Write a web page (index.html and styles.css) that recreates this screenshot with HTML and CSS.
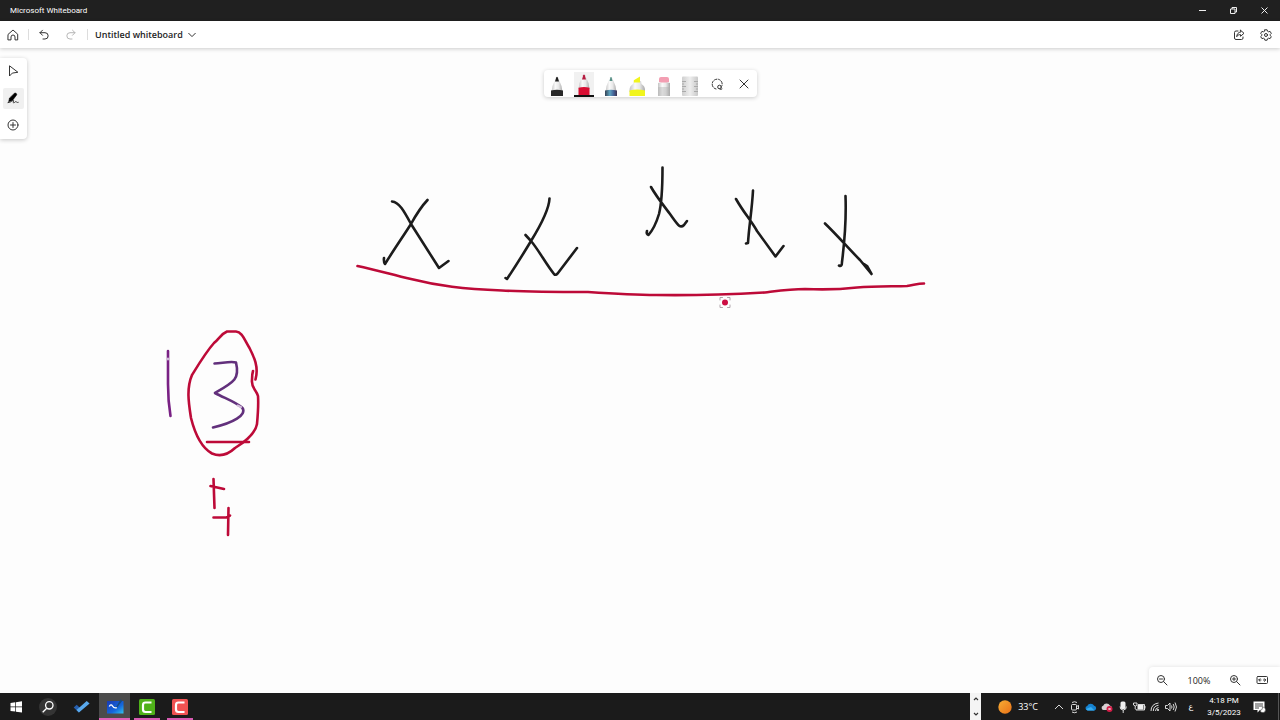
FILE: index.html
```html
<!DOCTYPE html>
<html lang="en">
<head>
<meta charset="utf-8">
<title>Microsoft Whiteboard</title>
<link rel="stylesheet" href="styles.css">
</head>
<body>
<div class="app">
  <header class="titlebar">
    <span class="titlebar-name">Microsoft Whiteboard</span>
    <div class="window-controls">
      <button class="window-btn" aria-label="Minimize"><svg width="9" height="9" viewBox="0 0 9 9"><path d="M1 4.500h7"/></svg></button>
      <button class="window-btn" aria-label="Restore"><svg width="9" height="9" viewBox="0 0 9 9"><path d="M1.500 3h4.500v4.500h-4.500zM3 3V1.500h4.500V6H6"/></svg></button>
      <button class="window-btn" aria-label="Close"><svg width="9" height="9" viewBox="0 0 9 9"><path d="M1.500 1.500l6 6M7.500 1.500l-6 6"/></svg></button>
    </div>
  </header>

  <nav class="header">
    <button class="icon-btn" aria-label="Home"><svg width="12" height="12" viewBox="0 0 12 12"><path d="M1.300 5.200L6 1l4.700 4.200v5.700H8V8a2 2 0 0 0-4 0v2.900H1.300z"/></svg></button>
    <span class="divider"></span>
    <button class="icon-btn" aria-label="Undo"><svg width="12" height="12" viewBox="0 0 12 12"><path d="M4.500 1.200L2 3.700l2.500 2.600M2 3.700h5a3 3 0 0 1 0 6.300H5"/></svg></button>
    <button class="icon-btn icon-btn-off" aria-label="Redo" disabled><svg width="12" height="12" viewBox="0 0 12 12"><path d="M7.500 1.200L10 3.700 7.500 6.300M10 3.700H5A3 3 0 0 0 5 10h2"/></svg></button>
    <span class="divider"></span>
    <button class="board-name">Untitled whiteboard<svg width="8" height="8" viewBox="0 0 8 8"><path d="M.7 2.300L4 5.600l3.300-3.300"/></svg></button>
    <div class="header-end">
      <button class="icon-btn" aria-label="Share"><svg width="12" height="12" viewBox="0 0 12 12"><path d="M5 2H3a1.500 1.500 0 0 0-1.500 1.500v5.500A1.500 1.500 0 0 0 3 10.500h5.500A1.500 1.500 0 0 0 10 9V8M7.500 1.200L11 4.300 7.500 7.300V5.600C5.500 5.600 4.500 6.300 3.700 7.700c.2-2.500 1.500-4.500 3.800-4.700z"/></svg></button>
      <button class="icon-btn" aria-label="Settings"><svg width="12" height="12" viewBox="0 0 12 12"><path d="M4.900.8h2.200l.5 1.500.9.500 1.600-.4 1.200 2-1.100 1.100v1l1.100 1.100-1.200 2-1.600-.4-.9.500-.5 1.500H4.900l-.5-1.500-.9-.5-1.600.4-1.200-2 1.100-1.100v-1L.7 4.400l1.200-2 1.600.4.9-.5z"/><circle cx="6" cy="6" r="1.500"/></svg></button>
    </div>
  </nav>

  <main class="board">
    <svg class="ink" viewBox="0 48 1280 645" preserveAspectRatio="xMinYMin slice" aria-label="Handwritten notes">
      <g class="ink-black">
        <path d="M392 201.500C399 202 404 211 411 224L439 268L448.500 261M427.500 200C420 208 417 213 411 224C402 238 393 251 385 264Q383.500 262 384 258"/>
        <path d="M549.500 198.500C549 211 539 228 531 241C522 256 515 267 507 279L505.500 278M525.500 235L531 241C538 249 546 264 554 274Q556 276 558 273L577 248"/>
        <path d="M662.500 167.500C662.500 188 662 202 659 214C656 224 652 231 648.500 235Q646 234 647 231M651 187C656 196 664 206 670 214C678 225 680 229 684 225L687 221"/>
        <path d="M753 190.500C752 210 749 226 748 243L746 243.500M736 199C744 213 750 219 757 231L775.500 256.500L783.500 246"/>
        <path d="M845.500 196C846.500 222 844 246 842 262Q842 267 839 265.500M825 223.500C837 235 849 249 860 260L871.500 274L867 266L864 264"/>
      </g>
      <g class="ink-red">
        <path d="M357.500 266C377 270 393 275 411 279C439 286 462 289 502 290.500C530 292 560 292 588 292C610 293.500 632 295 656 295C690 295.500 720 295 765 292.500C781 290.500 791 289 805 289C827 290 844 289 857 287.500C875 286 893 286.500 907 286C914 285 918 283.500 924 283.500"/>
        <path d="M255.500 379.500C259 367 254 357 249.500 348C244 339 242 332 236 331.500H227C221 334 220 338 214 343C206 352 200 362 192 375C186 389 189 405 191 418C195 434 202 448 212 453.500C220 457 227 455.500 235 448C243 443 255 435 257 424C258 413 258.500 403 258 396C256 389 251 388 252 380Q252 374 253 371"/>
        <path d="M207 442H249M213.500 479L214.500 508M210.500 486L224 489M213.500 517.500H226.500L230 515.500M228.500 508L228 535"/>
      </g>
      <g class="ink-galaxy">
        <path class="ink-purple" d="M168 351V384C168 399 169 407 170.500 416"/>
        <path class="ink-violet" d="M214.500 363.500C223 363 231 361 236 362.500C240 379 234 382 215 393C224 398 236 402 242.500 408C247 415 233 423 213 427.500"/>
        <path class="ink-spark" d="M237.500 405.500L241 407M168 358.500v1"/>
      </g>
      <g class="pointer">
        <circle class="pointer-dot" cx="725" cy="302.500" r="3"/>
        <path class="pointer-frame" d="M720 300v-2.500h2.500M727.500 297.500h2.500v2.500M730 305v2.500h-2.500M722.500 307.500H720V305"/>
      </g>
    </svg>

    <div class="side-tools">
      <button class="side-btn" aria-label="Select"><svg width="12" height="12" viewBox="0 0 12 12"><path d="M2.500 1.200v9.800l2.800-2.900 5.200-.8z"/></svg></button>
      <button class="side-btn side-btn-on" aria-label="Inking"><svg width="12" height="12" viewBox="0 0 12 12"><path class="fill" d="M7.500 1.200c1-.9 2.900.6 2.100 1.900L5.500 8.400l-3.900 1.300.9-3.500z"/><path d="M1 10.700c2.700 0 5-2.800 5.600-2.200.6.500-1.200 2.300.1 2.300 1 0 1.500-1.400 2.300-1.200.6.100.6 1.300 2.200.8"/></svg></button>
      <button class="side-btn" aria-label="Create"><svg width="12" height="12" viewBox="0 0 12 12"><circle cx="6" cy="6" r="5"/><path d="M6 3.500v5M3.500 6h5"/></svg></button>
    </div>

    <div class="pen-tools">
      <button class="pen-btn" aria-label="Black pen"><svg width="20" height="25" viewBox="0 0 20 25"><path fill="url(#body)" d="M4.500 20l1-6L8.800 6h2.400l3.300 8 1 6z"/><path fill="#222" d="M8 9.500l1.200-4q.8-1.400 1.600 0l1.200 4z"/><path fill="#292929" d="M4 18.500q6-1.700 12 0V24H4z"/></svg></button>
      <button class="pen-btn pen-btn-on" aria-label="Red pen"><svg width="20" height="23" viewBox="0 0 20 23"><path fill="url(#body)" d="M4.500 17l1-6L8.800 3.500h2.400l3.300 7.500 1 6z"/><path fill="#b51c40" d="M8 7.500l1.200-4.300q.8-1.200 1.600 0L12 7.500z"/><path fill="#d80d32" d="M4.500 15.700q5.500-1.500 11 0V23h-11z"/></svg></button>
      <button class="pen-btn" aria-label="Galaxy pen"><svg width="20" height="25" viewBox="0 0 20 25"><path fill="url(#body)" d="M4.500 20l1-6L8.800 6h2.400l3.300 8 1 6z"/><path fill="#589087" d="M8.500 9l.9-3.400q.6-1.400 1.200 0L11.500 9z"/><path fill="url(#galaxy)" d="M4 18.500q6-1.700 12 0V24H4z"/></svg></button>
      <button class="pen-btn" aria-label="Highlighter"><svg width="20" height="25" viewBox="0 0 20 25"><path fill="url(#body)" d="M2.500 18q0-4 3.500-6l1-3h7l.5 3q3.500 2 3.500 6v2H2.500z"/><path fill="#f1f51d" d="M6.800 10.500V8.300L13 4.500v6zM2.500 18.500q7.500-2 15.500 0V24H2.500z"/></svg></button>
      <button class="pen-btn" aria-label="Eraser"><svg width="20" height="25" viewBox="0 0 20 25"><path fill="url(#body)" d="M4 11q6-1.800 12 0v13H4z"/><path fill="#f39eb2" d="M5 10V7q0-2 2-2h6q2 0 2 2v3q-5 1-10 0z"/><path fill="#adadad" opacity=".4" d="M4 15h12v9H4z"/></svg></button>
      <button class="pen-btn" aria-label="Ruler"><svg width="20" height="25" viewBox="0 0 20 25"><rect x="2" y="4.500" width="16" height="19.500" rx="1" fill="url(#ruler)"/><path stroke="#aaa" d="M2 9.500h4M2 14.500h4M2 19.500h4M14 9.500h4M14 14.500h4M14 19.500h4M2 12h2M2 17h2M16 12h2M16 17h2"/></svg></button>
      <button class="pen-btn pen-btn-line" aria-label="Lasso select"><svg width="14" height="14" viewBox="0 0 14 14"><path stroke-dasharray="2.300 1.500" d="M6 12A5 5 0 1 1 12 8.500"/><circle cx="9.500" cy="10" r="1.800"/><path d="M9.500 11.800q1 1.500 2.500.2"/></svg></button>
      <button class="pen-btn pen-btn-line" aria-label="Close toolbar"><svg width="14" height="14" viewBox="0 0 14 14"><path d="M3 3l8 8M11 3l-8 8"/></svg></button>
    </div>

    <div class="zoom-panel">
      <button class="icon-btn" aria-label="Zoom out"><svg width="12" height="12" viewBox="0 0 12 12"><circle cx="5" cy="5" r="3.500"/><path d="M7.600 7.600L11 11M3.500 5h3"/></svg></button>
      <button class="zoom-value">100%</button>
      <button class="icon-btn" aria-label="Zoom in"><svg width="12" height="12" viewBox="0 0 12 12"><circle cx="5" cy="5" r="3.500"/><path d="M7.600 7.600L11 11M3.500 5h3M5 3.500v3"/></svg></button>
      <button class="icon-btn" aria-label="Fit to screen"><svg width="12" height="12" viewBox="0 0 12 12"><rect x="1" y="2.500" width="10.500" height="7" rx="1"/><path d="M5 6H3M7.500 6h2M4 4.700L2.700 6 4 7.300M8.500 4.700L9.800 6 8.500 7.300"/></svg></button>
    </div>
  </main>

  <footer class="taskbar">
    <button class="task-btn" aria-label="Start"><svg width="20" height="20" viewBox="0 0 20 20"><path fill="#fff" d="M4.500 6l4.800-.7v4.200H4.500zM10 5.200l6-.9v5.200h-6zM4.500 10.300h4.800v4.300l-4.800-.7zM10 10.300h6v5.300l-6-.9z"/></svg></button>
    <button class="task-btn" aria-label="Search"><svg width="20" height="20" viewBox="0 0 20 20"><circle cx="10" cy="10" r="9" fill="#343434"/><g fill="none" stroke="#fff" stroke-width="1.300"><circle cx="11.300" cy="8.300" r="3.700"/><path d="M8.700 11.200l-4 4"/></g></svg></button>
    <button class="task-btn task-btn-wide" aria-label="To Do"><svg width="20" height="20" viewBox="0 0 20 20"><path fill="#275fae" d="M1.700 10.500l3-2.800 5 4.700-2.800 3.200z"/><path fill="#59a9ed" d="M6.900 15.600l-2.400-2.500L14.700 4l2.900 2.600z"/></svg></button>
    <button class="task-btn task-btn-active" aria-label="Microsoft Whiteboard"><svg width="20" height="20" viewBox="0 0 20 20"><path fill="url(#app)" d="M2 4h16.500v12.500H2z"/><path fill="#174c84" d="M15.500 2.300l1.800 1.500-5.300 7-1.500.2z"/><path fill="none" stroke="#fff" stroke-width="1.400" d="M4.300 9.500Q6 6.500 7.500 9t4.300 1.700"/></svg></button>
    <button class="task-btn task-btn-open" aria-label="Camtasia"><svg width="20" height="20" viewBox="0 0 20 20"><rect x="2" y="2" width="16" height="16" rx="1.500" fill="#4fb119"/><path fill="none" stroke="#fff" stroke-width="2.200" d="M14.500 5.500h-6q-2.500 0-2.500 2.500v4.500Q6 15 8.500 15h6"/></svg></button>
    <button class="task-btn task-btn-open" aria-label="Camtasia Recorder"><svg width="20" height="20" viewBox="0 0 20 20"><rect x="2" y="2" width="16" height="16" rx="1.500" fill="#f05252"/><path fill="none" stroke="#fff" stroke-width="2.200" d="M14.500 5.500h-6q-2.500 0-2.500 2.500v4.500Q6 15 8.500 15h6"/></svg></button>

    <div class="tray">
      <div class="tray-scroll">
        <button class="scroll-btn" aria-label="Scroll up"><svg width="8" height="8" viewBox="0 0 8 8"><path d="M2 5l2-2 2 2"/></svg></button>
        <button class="scroll-btn" aria-label="Scroll down"><svg width="8" height="8" viewBox="0 0 8 8"><path d="M2 3l2 2 2-2"/></svg></button>
      </div>
      <button class="weather"><svg width="14" height="14" viewBox="0 0 14 14"><circle cx="7" cy="7" r="6.700" fill="url(#sun)"/></svg>33°C</button>
      <div class="tray-icons">
        <button class="tray-btn" aria-label="Show hidden icons"><svg width="14" height="14" viewBox="0 0 14 14"><path d="M3 9l4-4 4 4"/></svg></button>
        <button class="tray-btn" aria-label="Meet Now"><svg width="14" height="14" viewBox="0 0 14 14"><rect x="3.500" y="4.500" width="5" height="5.500" rx="1"/><path d="M8.500 6.500l2-1v3.500l-2-1M4 2.500q2.500-1.500 5 0M4 12q2.500 1.500 5 0"/></svg></button>
        <button class="tray-btn" aria-label="OneDrive"><svg width="14" height="14" viewBox="0 0 14 14"><path class="solid" fill="#1683d1" d="M3.500 10.500a2.300 2.300 0 0 1-.3-4.500 4 4 0 0 1 7-.3 2.500 2.500 0 0 1 .3 4.800z"/><path class="solid" fill="#36aef2" d="M2 9l5-2 3.500 3.500h-7z"/></svg></button>
        <button class="tray-btn" aria-label="Sync error"><svg width="14" height="14" viewBox="0 0 14 14"><path class="solid" fill="#d8d0d2" d="M3.500 10a2.200 2.200 0 0 1-.3-4.300 3.700 3.700 0 0 1 6.700-.2L12 7v3z"/><circle class="solid" cx="9.500" cy="9" r="3" fill="#d71d48"/><path d="M8.500 8l2 2M10.500 8l-2 2"/></svg></button>
        <button class="tray-btn" aria-label="Microphone"><svg width="14" height="14" viewBox="0 0 14 14"><rect class="solid" x="4.500" y="1.500" width="5" height="7.500" rx="1.500" fill="#eee"/><path d="M4 6.500q0 3.500 3.200 3.500t3.200-3.500M7.200 10v3"/></svg></button>
        <button class="tray-btn" aria-label="Battery"><svg width="14" height="14" viewBox="0 0 14 14"><rect class="solid" x="5.500" y="5" width="6" height="4.500" fill="#eee"/><path d="M4 9v1h8.500V4.500H6M13 6v2.500M1.500 3v2q2 2 3.500 0V3zM3.200 6v3"/></svg></button>
        <button class="tray-btn" aria-label="Wi-Fi"><svg width="14" height="14" viewBox="0 0 14 14"><circle class="solid" cx="10" cy="10" r="1" fill="#eee"/><path d="M7.500 11q0-3 3-3.500M5.300 11q0-5 5.200-5.700M3 11Q3 4 10.500 3"/></svg></button>
        <button class="tray-btn" aria-label="Volume"><svg width="14" height="14" viewBox="0 0 14 14"><path d="M1.500 5.500h2L6 3v8L3.500 8.500h-2zM7.500 5.500q1 1.500 0 3M9.200 4q2 3 0 6M11 2.500q3 4.500 0 9"/></svg></button>
      </div>
      <button class="language" lang="ar">ع</button>
      <button class="clock"><span>4:18 PM</span><span>3/5/2023</span></button>
      <button class="notifications" aria-label="Notifications"><svg width="14" height="14" viewBox="0 0 14 14"><path fill="#fff" d="M1.500 1.500h11v8.500H8l-2.500 2.500V10h-4z"/><path fill="none" stroke="#444" d="M3 4h8M3 6h8M3 8h4"/><path fill="#fff" stroke="#444" stroke-width=".6" d="M8 10.500a3 3 0 0 0 2.500-3.500 2.800 2.800 0 1 1-2.500 3.500z"/></svg></button>
    </div>
  </footer>
</div>

<svg class="defs" width="0" height="0" aria-hidden="true"><defs>
  <linearGradient id="body"><stop offset="0" stop-color="#c4c4c4"/><stop offset=".35" stop-color="#fafafa"/><stop offset=".65" stop-color="#e9e9e9"/><stop offset="1" stop-color="#a9a9a9"/></linearGradient>
  <linearGradient id="galaxy"><stop offset="0" stop-color="#344153"/><stop offset=".4" stop-color="#5fa4c0"/><stop offset=".7" stop-color="#46669a"/><stop offset="1" stop-color="#3b3150"/></linearGradient>
  <linearGradient id="ruler"><stop offset="0" stop-color="#cfcfcf"/><stop offset=".5" stop-color="#eeeeee"/><stop offset="1" stop-color="#c8c8c8"/></linearGradient>
  <linearGradient id="app" x2="1" y2="1"><stop offset="0" stop-color="#1939b3"/><stop offset=".6" stop-color="#1466dc"/><stop offset="1" stop-color="#31c5f0"/></linearGradient>
  <linearGradient id="sun" x2="1" y2="1"><stop offset="0" stop-color="#f6ad35"/><stop offset="1" stop-color="#ea7117"/></linearGradient>
</defs></svg>
</body>
</html>
```
FILE: styles.css
```css
* { box-sizing: border-box; }

body {
  margin: 0;
  font-family: "Open Sans", "Noto Sans", sans-serif;
  font-size: 9px;
  color: #242424;
}

button {
  display: flex;
  align-items: center;
  justify-content: center;
  margin: 0;
  padding: 0;
  border: 0;
  background: none;
  color: inherit;
  font: inherit;
}

svg { flex: none; }

.defs { position: absolute; }

.app {
  display: flex;
  flex-direction: column;
  height: 100vh;
  overflow: hidden;
}

/* Title bar */
.titlebar {
  display: flex;
  flex: none;
  align-items: center;
  justify-content: space-between;
  height: 21px;
  padding-left: 10px;
  background: #202020;
  color: #fff;
  font-family: Roboto, sans-serif;
  font-size: 8px;
}

.window-controls { display: flex; height: 100%; }
.window-btn { width: 31px; }
.window-btn svg { fill: none; stroke: #eee; stroke-width: 1; }

/* Header */
.header {
  position: relative;
  z-index: 1;
  display: flex;
  flex: none;
  align-items: center;
  height: 27px;
  padding: 0 3px;
  background: #fff;
  box-shadow: 0 1px 4px rgba(0, 0, 0, 0.2);
}

.icon-btn { width: 21px; height: 21px; padding-right: 1px; }

.icon-btn svg,
.board-name svg,
.side-btn svg,
.pen-btn-line svg {
  fill: none;
  stroke: #333;
  stroke-width: 1;
  stroke-linejoin: round;
  stroke-linecap: round;
}

.icon-btn-off { margin-left: 6px; opacity: 0.35; }
.divider { width: 1px; height: 11px; margin: 0 5px 0 4px; background: #ddd; }
.icon-btn-off + .divider { margin: 0 7px 0 5px; }

.board-name {
  gap: 5px;
  font-weight: 600;
}

.header-end { display: flex; gap: 6px; margin-left: auto; }

/* Board */
.board {
  position: relative;
  flex: 1;
  min-height: 0;
  background: #fdfdfd;
}

.ink {
  position: absolute;
  inset: 0;
  width: 100%;
  height: 100%;
  fill: none;
  stroke-width: 2.6;
  stroke-linecap: round;
  stroke-linejoin: round;
}

.ink-black { stroke: #1c1c1c; }
.ink-red { stroke: #bd0a38; }
.ink-purple { stroke: #792184; }
.ink-violet { stroke: #62307c; }
.ink-spark { stroke: #d2bddb; stroke-width: 2; }
.pointer-dot { fill: #cc0d43; }
.pointer-frame { stroke: #b0a5ab; stroke-width: 1; }

.side-tools {
  position: absolute;
  top: 10px;
  left: 0;
  display: flex;
  flex-direction: column;
  gap: 6px;
  padding: 3px;
  border-radius: 0 4px 4px 0;
  background: #fff;
  box-shadow: 0 1px 4px rgba(0, 0, 0, 0.22);
}

.side-btn { width: 21px; height: 21px; padding: 0 1px 1px 0; border-radius: 2px; }
.side-btn-on { background: #f0f0f0; }
.side-btn .fill { fill: #000; stroke: #000; stroke-width: 0.5; }

.pen-tools {
  position: absolute;
  top: 22px;
  left: 544px;
  display: grid;
  grid-template-columns: repeat(8, 1fr);
  width: 213px;
  height: 27px;
  border-radius: 4px;
  background: #fff;
  box-shadow: 0 1px 4px rgba(0, 0, 0, 0.2);
}

.pen-btn { align-items: flex-end; }
.pen-btn-on { margin: 2px 3px 0; border-bottom: 2px solid #111; background: #f1f1f1; }
.pen-btn-line { align-items: center; }

.zoom-panel {
  position: absolute;
  right: 0;
  bottom: 0;
  display: flex;
  align-items: center;
  gap: 6px;
  height: 26px;
  padding: 0 7px 0 3px;
  border-radius: 4px 0 0 0;
  background: #fff;
  box-shadow: 0 0 4px rgba(0, 0, 0, 0.12);
}

.zoom-value { width: 40px; }

/* Taskbar */
.taskbar {
  display: flex;
  flex: none;
  height: 27px;
  background: #1b1b1b;
  color: #fff;
}

.task-btn { width: 32px; }
.task-btn-wide { width: 35px; }

.task-btn-open {
  width: 26px;
  margin-left: 4px;
  margin-right: 3px;
  padding-top: 2px;
  border-bottom: 2px solid #d75bb2;
}

.task-btn-active {
  width: 31px;
  padding-top: 2px;
  border-bottom: 2px solid #e161b9;
  background: #4b4b4b;
}

.tray { display: flex; margin-left: auto; }

.tray-scroll {
  display: flex;
  flex-direction: column;
  align-items: center;
  justify-content: space-between;
  width: 11px;
  padding: 2px 0;
  background: #f4f4f4;
}

.scroll-btn svg { fill: none; stroke: #333; stroke-width: 1.2; }
.weather { gap: 6px; margin-left: 17px; font-size: 9px; }
.tray-icons { display: flex; margin-left: 13px; }
.tray-btn { width: 16px; }
.tray-btn svg { fill: none; stroke: #eee; stroke-width: 0.9; }
.tray-btn .solid { stroke: none; }
.language { width: 24px; font-family: "DejaVu Sans", sans-serif; font-size: 8px; }

.clock {
  flex-direction: column;
  width: 42px;
  font-family: Roboto, sans-serif;
  font-size: 8px;
  line-height: 12px;
}

.notifications {
  width: 34px;
  margin-right: 1px;
  padding-right: 6px;
  border-right: 1px solid #555;
}
```
